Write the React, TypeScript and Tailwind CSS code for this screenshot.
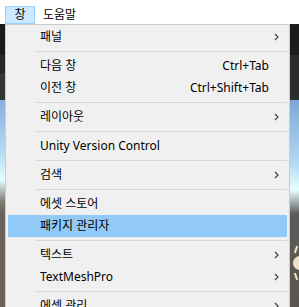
import React from "react";

type Item =
  | { kind: "sep" }
  | { kind: "item"; label: string; shortcut?: string; sub?: boolean; active?: boolean };

const items: Item[] = [
  { kind: "item", label: "패널", sub: true },
  { kind: "sep" },
  { kind: "item", label: "다음 창", shortcut: "Ctrl+Tab" },
  { kind: "item", label: "이전 창", shortcut: "Ctrl+Shift+Tab" },
  { kind: "sep" },
  { kind: "item", label: "레이아웃", sub: true },
  { kind: "sep" },
  { kind: "item", label: "Unity Version Control" },
  { kind: "sep" },
  { kind: "item", label: "검색", sub: true },
  { kind: "sep" },
  { kind: "item", label: "에셋 스토어" },
  { kind: "item", label: "패키지 관리자", active: true },
  { kind: "sep" },
  { kind: "item", label: "텍스트", sub: true },
  { kind: "item", label: "TextMeshPro", sub: true },
  { kind: "sep" },
  { kind: "item", label: "에셋 관리", sub: true },
];

function Chevron() {
  return (
    <svg width="5" height="8" viewBox="0 0 5 8" className="shrink-0">
      <path d="M1 1 L4 4 L1 7" fill="none" stroke="#3a3a3a" strokeWidth="1.1" />
    </svg>
  );
}

export default function App() {
  return (
    <div className="w-[299px] h-[307px] overflow-hidden bg-white text-[12px] text-black font-['Noto_Sans','Noto_Sans_CJK_KR',sans-serif]">
      {/* Menu bar */}
      <div className="h-[24px] flex items-start pl-[5px] pt-[6px] bg-white">
        <div className="h-[18px] w-[30px] border border-[#99d1ff] bg-[#cce8ff] flex items-center justify-center leading-none">
          창
        </div>
        <div className="h-[18px] ml-[8px] flex items-center leading-none">도움말</div>
      </div>

      <div className="flex h-[283px]">
        {/* scene behind, left */}
        <div className="w-[5px] shrink-0 bg-[linear-gradient(to_bottom,#1a1a1a_0px,#1a1a1a_31px,#272727_31px,#272727_49px,#363636_49px,#363636_76px,#86b0de_76px,#b8dcf3_130px,#e4ffff_156px,#7c7a74_178px,#6a625c_190px,#6a625c_283px)]" />

        {/* dropdown */}
        <div className="w-[285px] shrink-0 border border-[#cccccc] bg-[#f0f0f0] px-[2px] pt-[1px] self-start">
          {items.map((it, i) =>
            it.kind === "sep" ? (
              <div key={i} className="h-[7px] flex items-center pl-[28px]">
                <div className="h-px w-full bg-[#d7d7d7]" />
              </div>
            ) : (
              <div
                key={i}
                className={`h-[22px] flex items-center pl-[32px] pr-[8px] ${it.active ? "bg-[#91c9f7]" : ""}`}
              >
                <span className="flex-1 whitespace-nowrap">{it.label}</span>
                {it.shortcut && <span className="mr-[10px] whitespace-nowrap">{it.shortcut}</span>}
                {it.sub && <Chevron />}
              </div>
            )
          )}
        </div>

        {/* scene behind, right */}
        <div className="flex-1 relative overflow-hidden bg-[linear-gradient(to_bottom,#1c1c1c_0px,#1c1c1c_31px,#2c2c2c_31px,#2c2c2c_76px,#7ea6d6_76px,#b4dbf2_140px,#e8ffff_166px,#5c5c5c_190px,#5a554f_283px)]">
          <div className="absolute left-[3px] top-[232px] w-[14px] h-[14px] rounded-full bg-[#efe3c4]" />
          <div className="absolute left-[5px] top-[222px] w-[2px] h-[7px] bg-[#efe3c4] rotate-[20deg]" />
          <div className="absolute left-[5px] top-[249px] w-[2px] h-[7px] bg-[#efe3c4] -rotate-[20deg]" />
        </div>
      </div>
    </div>
  );
}
